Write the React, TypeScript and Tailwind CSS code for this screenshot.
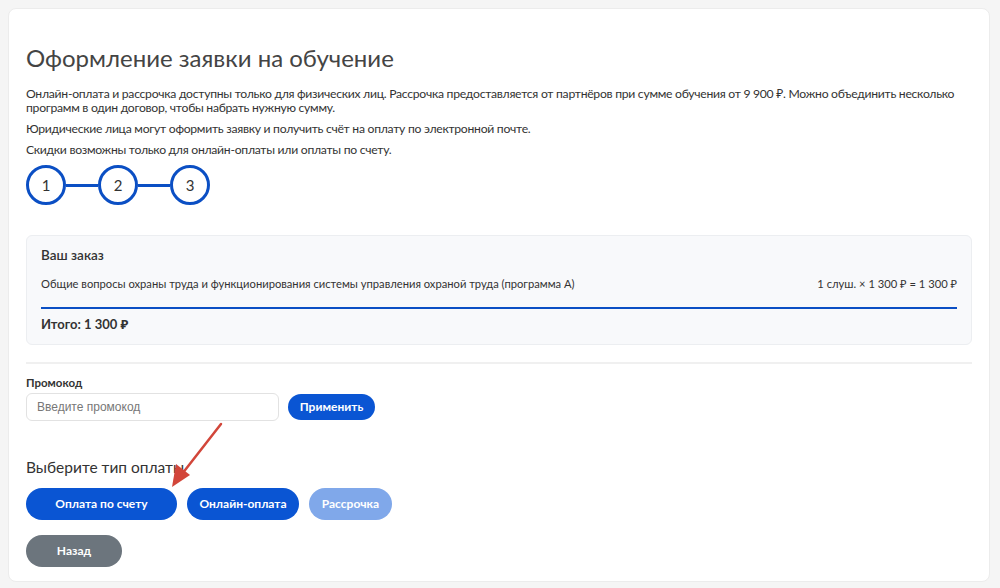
import React from 'react';

const font = { fontFamily: 'Lato, "Noto Sans", sans-serif' };

function Steps() {
  return (
    <div className="flex items-center mt-[8px]">
      {[1, 2, 3].map((n, i) => (
        <React.Fragment key={n}>
          {i > 0 && <div className="w-[32px] h-[3px] bg-[#0b4fc4]" />}
          <div className="w-[40px] h-[40px] rounded-full border-[3px] border-[#0b4fc4] flex items-center justify-center text-[15px] text-[#333]">
            {n}
          </div>
        </React.Fragment>
      ))}
    </div>
  );
}

function OrderSummary() {
  return (
    <div className="mt-[30px] rounded-md border border-[#eceef1] bg-[#f8f9fb] px-[14px] pt-[9px] pb-[9px]">
      <div className="text-[13.5px] font-semibold text-[#333]">Ваш заказ</div>
      <div className="flex justify-between mt-[11px] text-[11.2px] text-[#333]">
        <span>Общие вопросы охраны труда и функционирования системы управления охраной труда (программа А)</span>
        <span>1 слуш. × 1 300 ₽ = 1 300 ₽</span>
      </div>
      <div className="mt-[14px] h-[2px] bg-[#0b4fc4]" />
      <div className="mt-[6px] text-[13px] font-bold text-[#333]">Итого: 1 300 ₽</div>
    </div>
  );
}

export default function App() {
  return (
    <div className="min-h-[588px] bg-[#f5f5f5] p-[8px] pr-[10px]" style={font}>
      <div className="relative bg-white rounded-lg border border-[#ececec] px-[17px] pt-[34px] pb-[14px]">
        <h1 className="text-[24px] leading-[30px] text-[#444] font-normal">Оформление заявки на обучение</h1>
        <div className="mt-[14px] text-[12.2px] tracking-[-0.28px] leading-[14px] text-[#333] space-y-[7px]">
          <p>
            Онлайн-оплата и рассрочка доступны только для физических лиц. Рассрочка предоставляется от партнёров при сумме обучения от 9 900 ₽. Можно объединить несколько программ в один договор, чтобы набрать нужную сумму.
          </p>
          <p>Юридические лица могут оформить заявку и получить счёт на оплату по электронной почте.</p>
          <p>Скидки возможны только для онлайн-оплаты или оплаты по счету.</p>
        </div>

        <Steps />
        <OrderSummary />

        <div className="mt-[17px] h-[2px] bg-[#f0f0f0]" />

        <div className="mt-[10px] text-[11.5px] font-bold text-[#333]">Промокод</div>
        <div className="flex items-center gap-[9px] mt-[2px]">
          <input
            className="w-[253px] h-[28px] rounded-md border border-[#e2e2e2] px-[10px] text-[12px] outline-none placeholder:text-[#777]"
            placeholder="Введите промокод"
            style={{ fontFamily: '"Liberation Sans", Arial, sans-serif' }}
          />
          <button className="w-[87px] h-[26px] rounded-full bg-[#0a55d3] text-white text-[12px] font-bold">Применить</button>
        </div>

        <div className="mt-[35px] text-[15.5px] text-[#333]">Выберите тип оплаты</div>
        <div className="flex gap-[10px] mt-[9px]">
          <button className="w-[151px] h-[32px] rounded-full bg-[#0a55d3] text-white text-[12px] font-bold">Оплата по счету</button>
          <button className="w-[112px] h-[32px] rounded-full bg-[#0a55d3] text-white text-[12px] font-bold">Онлайн-оплата</button>
          <button className="w-[83px] h-[32px] rounded-full bg-[#80a8ea] text-white text-[12px] font-bold">Рассрочка</button>
        </div>
        <button className="mt-[15px] w-[96px] h-[32px] rounded-full bg-[#6c757d] text-white text-[12px] font-bold">Назад</button>

        <svg className="absolute left-0 top-0 pointer-events-none" width="990" height="580" viewBox="0 0 990 580">
          <line x1="212" y1="415" x2="173" y2="465" stroke="#d2463a" strokeWidth="2.5" strokeLinecap="round" />
          <polygon points="163,478 167,455 181,466" fill="#d2463a" />
        </svg>
      </div>
    </div>
  );
}
